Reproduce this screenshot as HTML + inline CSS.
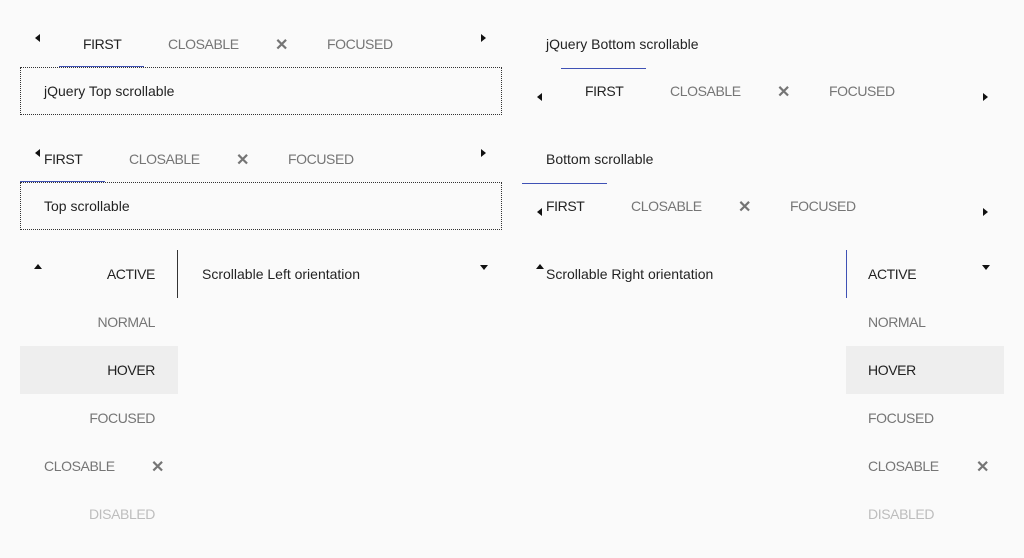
<!DOCTYPE html>
<html><head><style>
body{margin:0;width:1024px;height:558px;background:#fafafa;font-family:"Liberation Sans",sans-serif;font-size:14px;color:rgba(0,0,0,.87);position:relative;overflow:hidden}
.t{position:absolute;line-height:16px;white-space:nowrap}
.u{letter-spacing:-0.4px}
.g{color:#757575}
.d{color:#bdbdbd}
.x{position:absolute;color:#757575;font-size:16px;line-height:16px;font-weight:bold;margin-top:2px}
.box{position:absolute;border:1px dotted #333;box-sizing:border-box}
.ln{position:absolute;height:1px;background:#3f51b5}
.al{position:absolute;width:0;height:0;border-top:4px solid transparent;border-bottom:4px solid transparent;border-right:5px solid #111}
.ar{position:absolute;width:0;height:0;border-top:4px solid transparent;border-bottom:4px solid transparent;border-left:5px solid #111}
.au{position:absolute;width:0;height:0;border-left:4px solid transparent;border-right:4px solid transparent;border-bottom:5px solid #111}
.ad{position:absolute;width:0;height:0;border-left:4px solid transparent;border-right:4px solid transparent;border-top:5px solid #111}
</style></head><body>
<div class="al" style="left:35px;top:34px"></div>
<div class="t u" style="left:83px;top:36px">FIRST</div>
<div class="t u g" style="left:168px;top:36px">CLOSABLE</div>
<div class="x" style="left:275px;top:36px">✕</div>
<div class="t u g" style="left:327px;top:36px">FOCUSED</div>
<div class="ar" style="left:481px;top:34px"></div>
<div class="ln" style="left:59px;top:66px;width:85px"></div>
<div class="box" style="left:20px;top:67px;width:482px;height:48px"></div>
<div class="t" style="left:44px;top:83px">jQuery Top scrollable</div>
<div class="al" style="left:35px;top:149px"></div>
<div class="t u" style="left:44px;top:151px">FIRST</div>
<div class="t u g" style="left:129px;top:151px">CLOSABLE</div>
<div class="x" style="left:236px;top:151px">✕</div>
<div class="t u g" style="left:288px;top:151px">FOCUSED</div>
<div class="ar" style="left:481px;top:149px"></div>
<div class="ln" style="left:20px;top:181px;width:85px"></div>
<div class="box" style="left:20px;top:182px;width:482px;height:48px"></div>
<div class="t" style="left:44px;top:198px">Top scrollable</div>
<div class="t" style="left:546px;top:36px">jQuery Bottom scrollable</div>
<div class="ln" style="left:561px;top:68px;width:85px"></div>
<div class="al" style="left:537px;top:93px"></div>
<div class="t u" style="left:585px;top:83px">FIRST</div>
<div class="t u g" style="left:670px;top:83px">CLOSABLE</div>
<div class="x" style="left:777px;top:83px">✕</div>
<div class="t u g" style="left:829px;top:83px">FOCUSED</div>
<div class="ar" style="left:983px;top:93px"></div>
<div class="t" style="left:546px;top:151px">Bottom scrollable</div>
<div class="ln" style="left:522px;top:183px;width:85px"></div>
<div class="al" style="left:537px;top:208px"></div>
<div class="t u" style="left:546px;top:198px">FIRST</div>
<div class="t u g" style="left:631px;top:198px">CLOSABLE</div>
<div class="x" style="left:738px;top:198px">✕</div>
<div class="t u g" style="left:790px;top:198px">FOCUSED</div>
<div class="ar" style="left:983px;top:208px"></div>
<div class="au" style="left:34px;top:264px"></div>
<div style="position:absolute;left:20px;top:346px;width:158px;height:48px;background:#eeeeee"></div>
<div class="t u" style="right:869px;top:266px">ACTIVE</div>
<div class="t u g" style="right:869px;top:314px">NORMAL</div>
<div class="t u" style="right:869px;top:362px">HOVER</div>
<div class="t u g" style="right:869px;top:410px">FOCUSED</div>
<div class="t u g" style="left:44px;top:458px">CLOSABLE</div>
<div class="x" style="left:151px;top:458px">✕</div>
<div class="t u d" style="right:869px;top:506px">DISABLED</div>
<div style="position:absolute;left:177px;top:250px;width:1px;height:48px;background:#333"></div>
<div class="t" style="left:202px;top:266px">Scrollable Left orientation</div>
<div class="ad" style="left:480px;top:265px"></div>
<div class="au" style="left:536px;top:264px"></div>
<div class="t" style="left:546px;top:266px">Scrollable Right orientation</div>
<div style="position:absolute;left:846px;top:250px;width:1px;height:48px;background:#3f51b5"></div>
<div style="position:absolute;left:846px;top:346px;width:158px;height:48px;background:#eeeeee"></div>
<div class="t u" style="left:868px;top:266px">ACTIVE</div>
<div class="t u g" style="left:868px;top:314px">NORMAL</div>
<div class="t u" style="left:868px;top:362px">HOVER</div>
<div class="t u g" style="left:868px;top:410px">FOCUSED</div>
<div class="t u g" style="left:868px;top:458px">CLOSABLE</div>
<div class="x" style="left:976px;top:458px">✕</div>
<div class="t u d" style="left:868px;top:506px">DISABLED</div>
<div class="ad" style="left:982px;top:265px"></div>
</body></html>
